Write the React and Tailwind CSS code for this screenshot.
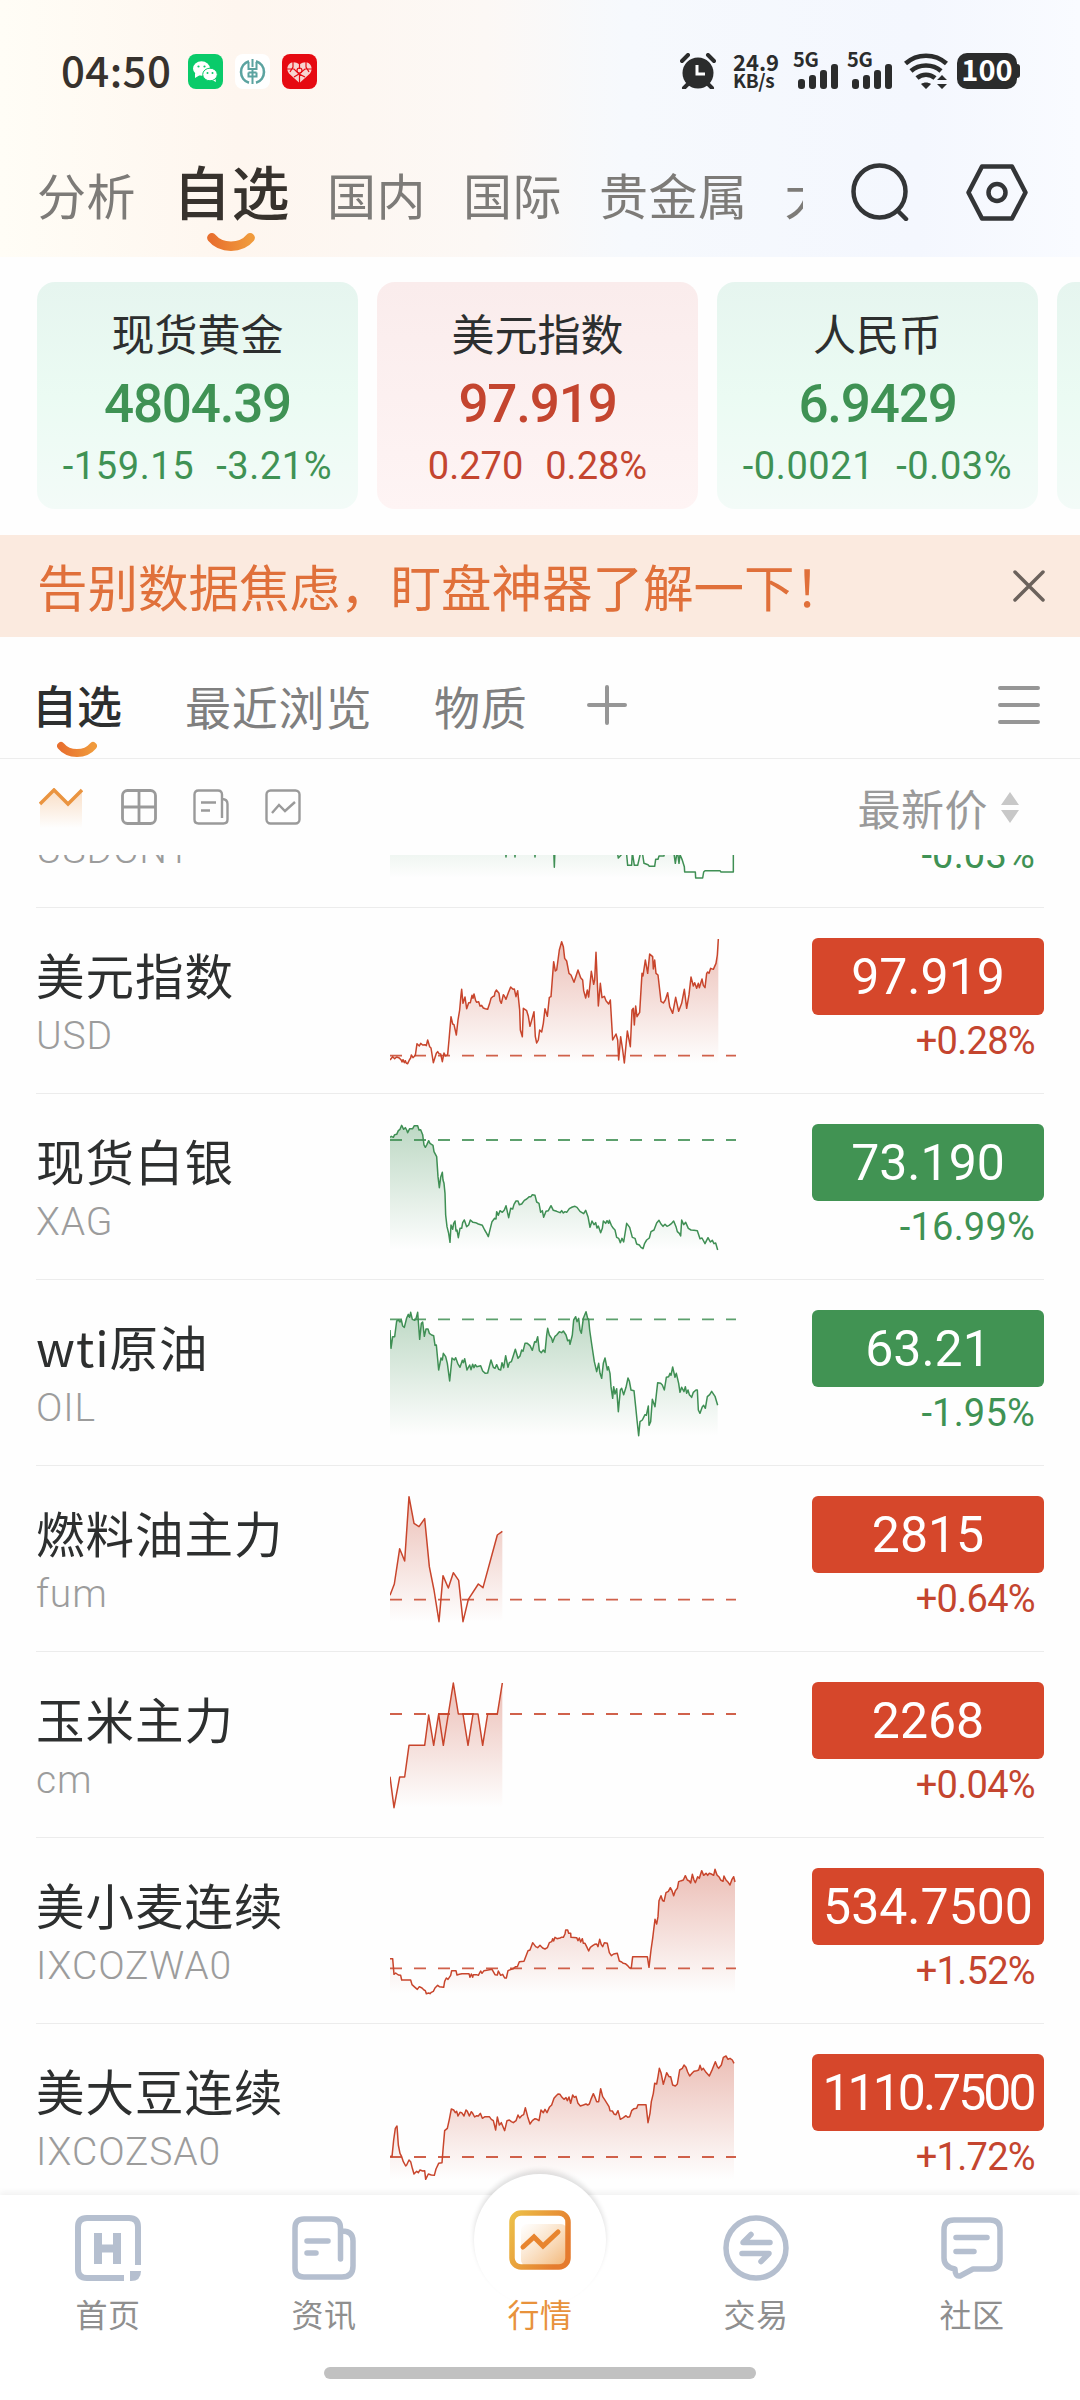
const GREEN = "#3f8f54";
const RED = "#c8452c";

const cards = [
  { name: "现货黄金", change: "-159.15", percent: "-3.21%", price: "4804.39", up: false },
  { name: "美元指数", change: "0.270", percent: "0.28%", price: "97.919", up: true },
  { name: "人民币", change: "-0.0021", percent: "-0.03%", price: "6.9429", up: false },
];

const rows = [
  {
    name: "人民币",
    code: "USDCNY",
    price: "6.9429",
    percent: "-0.03%",
    up: false,
    top: 0,
    base: 60,
    points:
      "60,180 200,150 300,300 400,380 406,380 408,405 410,380 433,380 435,405 437,380 493,380 495,405 497,380 551,380 553,436 555,380 740,380 745,408 754,398 756,380 770,398 773,430 785,430 787,390 793,430 803,430 811,395 818,398 822,424 834,428 838,433 854,433 857,412 864,412 867,402 882,402 884,380 910,380 916,424 922,385 927,424 930,398 936,412 943,434 944,450 976,450 977,468 998,468 1001,450 1005,446 1050,446 1053,450 1090,450 1090,380",
  },
  {
    name: "美元指数",
    code: "USD",
    price: "97.919",
    percent: "+0.28%",
    up: true,
    top: 24,
    base: 467,
    points:
      "60,480 68,470 74,476 80,471 88,474 94,481 96,486 99,479 103,488 106,482 109,490 113,491 118,480 122,474 124,465 129,473 136,466 141,431 148,438 152,430 158,435 165,434 169,437 173,420 179,440 183,444 190,488 199,460 203,455 207,461 212,462 217,485 222,459 227,468 233,464 237,420 243,350 248,372 252,374 259,405 264,360 269,330 273,285 275,268 279,310 285,291 290,326 296,308 301,308 306,286 309,295 312,282 317,302 320,307 326,305 330,318 335,316 340,324 346,326 353,328 359,310 363,295 368,290 373,288 375,277 379,270 387,280 390,302 394,310 400,284 403,288 408,298 415,278 422,261 429,268 433,267 438,290 443,272 449,330 451,390 457,410 460,325 470,332 475,349 480,379 492,335 496,410 500,429 505,420 509,390 515,396 520,370 525,326 532,349 538,292 543,290 551,185 556,213 560,210 568,150 575,125 580,140 584,175 590,183 597,220 603,225 612,247 624,210 632,233 638,240 641,272 647,294 652,270 656,291 664,214 671,253 674,240 678,157 685,318 691,250 696,293 703,289 708,302 716,312 721,300 728,420 738,402 743,420 746,480 752,410 758,450 763,489 772,393 781,440 786,330 790,325 793,375 797,318 801,350 809,337 816,220 819,228 826,180 833,220 839,162 848,170 850,207 854,180 858,220 864,225 873,304 880,309 886,300 893,278 899,320 908,340 917,292 926,334 935,310 943,268 950,325 957,284 963,231 970,258 974,248 980,265 985,250 988,263 996,237 1000,256 1005,263 1010,220 1013,216 1017,220 1022,205 1030,208 1038,190 1042,165 1045,117",
  },
  {
    name: "现货白银",
    code: "XAG",
    price: "73.190",
    percent: "-16.99%",
    up: false,
    top: 582,
    base: 720,
    points:
      "60,712 64,709 70,712 74,704 80,703 85,692 90,688 95,676 101,688 106,683 110,690 113,698 119,686 128,686 133,677 143,677 147,690 152,689 158,704 162,735 166,742 171,733 176,722 180,730 189,736 192,755 200,770 204,830 208,863 212,832 217,817 219,840 222,850 225,880 227,945 231,980 236,1000 240,1027 243,975 248,988 251,970 255,963 258,993 261,990 265,1013 270,985 275,985 278,968 283,960 290,980 296,975 301,960 309,967 317,968 325,972 337,976 344,990 350,1000 355,1010 361,985 366,965 374,955 378,957 380,935 385,946 390,932 397,937 403,930 408,917 416,953 422,925 428,927 432,913 438,903 444,903 448,914 455,912 463,901 470,897 478,890 483,890 487,884 495,886 500,906 507,910 512,937 517,932 521,952 528,934 535,932 543,917 550,931 560,934 570,938 575,932 580,939 585,935 590,937 598,926 607,921 615,919 621,922 630,934 641,941 647,931 654,950 660,982 666,963 672,974 677,968 681,984 685,978 692,998 697,985 700,963 707,970 711,962 716,970 718,961 724,976 730,985 735,990 740,1012 746,1015 751,1028 756,1015 761,1026 770,970 779,982 787,1012 795,1015 800,1032 808,1035 813,1042 819,1046 824,1030 830,1020 838,1014 843,995 852,990 860,969 867,961 873,972 879,979 885,973 891,979 897,976 905,970 911,963 918,980 922,995 928,1000 932,1008 935,960 941,974 947,967 955,985 963,990 972,991 982,992 990,1016 996,1014 1005,1031 1014,1013 1021,1026 1027,1021 1032,1031 1037,1029 1043,1050",
  },
  {
    name: "wti原油",
    code: "OIL",
    price: "63.21",
    percent: "-1.95%",
    up: false,
    top: 0,
    base: 118,
    points:
      "60,150 63,205 68,170 74,170 80,123 86,120 90,126 94,120 98,138 103,142 110,114 115,103 119,112 122,97 127,118 134,121 138,116 143,97 149,178 154,130 158,126 163,169 168,147 174,147 178,160 185,165 191,167 195,196 199,195 206,270 213,234 217,240 220,220 227,230 232,250 239,303 246,234 253,240 257,233 263,250 270,262 277,241 280,248 284,236 291,270 299,255 303,269 308,253 312,263 316,254 320,260 332,257 338,273 346,280 353,279 363,240 370,262 375,265 380,254 386,268 392,270 396,248 401,263 407,227 414,262 418,248 424,245 428,233 436,208 444,235 450,228 455,210 459,214 465,190 472,190 480,197 487,211 494,185 498,187 503,170 508,212 514,218 520,210 525,217 530,165 533,145 538,165 545,175 548,187 555,169 560,165 568,155 575,158 580,153 588,165 593,182 598,180 600,193 607,165 611,120 617,110 621,125 626,115 630,150 634,160 640,115 644,105 648,95 653,115 656,118 659,150 665,192 673,245 680,275 686,250 690,280 695,295 700,250 705,234 712,270 715,260 720,280 723,320 728,355 731,320 735,342 740,326 745,395 751,330 755,325 761,344 768,322 774,294 778,303 783,330 792,332 797,380 801,420 806,467 810,425 817,420 825,404 829,406 835,378 837,436 842,425 847,358 855,380 863,308 872,310 877,315 883,330 889,292 896,290 900,280 903,286 908,261 915,292 919,280 926,310 930,337 935,322 942,335 946,320 950,340 954,330 958,344 965,352 970,337 978,330 982,330 985,390 990,400 997,380 1001,376 1006,385 1012,350 1019,344 1025,334 1035,349 1043,376",
  },
  {
    name: "燃料油主力",
    code: "fum",
    price: "2815",
    percent: "+0.64%",
    up: true,
    top: 558,
    base: 959,
    points:
      "60,946 73,912 89,806 104,843 117,650 132,730 147,740 164,716 178,860 192,930 207,1025 219,887 235,924 250,878 266,901 279,1025 295,958 325,912 339,923 382,765 397,754",
  },
  {
    name: "玉米主力",
    code: "cm",
    price: "2268",
    percent: "+0.04%",
    up: true,
    top: -24,
    base: 162,
    points:
      "60,350 72,443 89,351 104,351 117,256 164,256 176,165 191,256 206,162 235,162 220,256 206,162 235,162 250,69 265,162 279,162 294,256 309,162 279,162 324,162 338,256 353,162 382,162 397,69",
  },
  {
    name: "美小麦连续",
    code: "IXCOZWA0",
    price: "534.7500",
    percent: "+1.52%",
    up: true,
    top: -36,
    base: 355,
    points:
      "60,326 68,326 72,373 77,369 85,375 92,376 95,390 122,390 126,404 135,412 142,418 148,410 156,414 162,420 166,422 169,431 176,429 180,431 184,427 190,424 195,414 203,406 208,410 221,412 224,394 229,384 234,388 242,376 245,362 258,362 261,375 268,373 276,371 297,371 300,382 304,372 308,382 310,374 320,374 325,376 332,363 336,370 342,362 366,358 375,374 382,375 385,363 392,376 398,373 404,384 409,384 414,362 424,358 430,356 437,350 442,350 448,335 462,334 468,318 474,302 480,300 488,278 497,290 503,293 510,286 518,294 525,297 532,293 538,278 545,275 548,266 551,273 555,262 561,266 570,264 574,262 580,262 585,252 587,240 593,240 596,250 602,250 603,262 620,263 624,272 628,264 632,276 637,266 640,280 645,280 650,290 656,303 661,292 668,287 674,283 680,282 684,290 689,268 694,284 698,290 703,278 712,280 718,308 724,317 731,312 742,310 748,333 755,336 760,340 766,341 772,346 779,354 784,353 788,320 832,320 837,352 843,300 848,265 851,240 855,208 860,222 864,200 867,152 873,137 878,152 882,154 888,128 895,124 901,113 906,122 911,137 916,122 922,115 926,95 934,92 940,90 946,77 952,90 958,93 962,99 967,73 972,90 976,98 983,80 988,85 995,62 1001,76 1008,70 1013,76 1018,70 1024,72 1031,76 1035,58 1041,75 1048,82 1052,90 1059,94 1062,78 1068,90 1073,95 1080,105 1086,88 1091,80 1095,96",
  },
  {
    name: "美大豆连续",
    code: "IXCOZSA0",
    price: "1110.7500",
    percent: "+1.72%",
    up: true,
    top: 522,
    base: 921,
    points:
      "60,919 66,920 71,870 76,835 81,828 85,885 90,910 95,920 100,935 107,948 110,945 117,930 122,935 127,955 132,972 140,964 145,968 150,960 158,963 164,962 167,988 175,972 184,975 193,976 198,957 206,940 216,938 219,900 224,842 232,835 238,808 244,777 251,780 256,788 260,784 264,798 270,787 275,788 282,798 288,780 292,784 298,798 304,785 308,790 314,801 320,797 325,798 331,790 337,805 345,800 358,800 364,808 370,812 377,840 382,801 388,825 394,818 404,842 411,812 418,810 424,815 430,818 438,812 444,795 449,804 455,797 461,794 466,773 473,800 480,822 487,812 495,806 501,808 507,812 513,780 520,788 525,778 531,788 538,772 545,765 552,745 558,738 564,732 570,733 576,742 582,748 588,743 592,752 597,741 602,760 608,735 613,742 618,739 624,760 631,768 640,765 648,762 653,765 658,762 664,745 670,731 675,742 680,755 686,755 692,716 698,740 704,749 711,760 717,770 720,782 727,783 733,793 738,794 744,782 751,808 760,803 768,797 773,802 779,800 785,782 792,776 800,775 804,764 828,764 834,818 840,790 844,755 850,730 854,700 860,702 864,680 868,655 873,668 880,703 890,668 897,680 902,680 908,705 916,708 922,702 929,660 937,655 942,645 948,652 953,666 959,678 966,670 972,664 980,662 986,660 990,646 995,660 1000,655 1008,667 1018,678 1027,658 1036,635 1042,650 1046,655 1054,645 1060,622 1068,618 1074,628 1080,625 1087,630 1092,640",
  },
];

function Smile({ className }) {
  return (
    <svg viewBox="0 0 48 18" className={className} fill="none">
      <defs>
        <linearGradient id="smile" x1="0" x2="1" y1="0" y2="0">
          <stop offset="0" stopColor="#e8702f" />
          <stop offset="1" stopColor="#f09a3c" />
        </linearGradient>
      </defs>
      <path
        d="M4.800 4.800C14 16 34 16 43.200 4.800"
        stroke="url(#smile)"
        strokeWidth="9.400"
        strokeLinecap="round"
      />
    </svg>
  );
}

function Signal() {
  return (
    <div className="-mt-px flex h-[37px] w-[44px] flex-col">
      <span className="-ml-[2px] h-[12px] text-[20px] leading-[14px] font-bold tracking-[-0.3px]">5G</span>
      <div className="ml-[3px] flex h-[25px] items-end gap-[4px]">
        <i className="h-[10px] w-[7px] rounded-[3px] bg-current" />
        <i className="h-[14px] w-[7px] rounded-[3px] bg-current" />
        <i className="h-[19px] w-[7px] rounded-[3px] bg-current" />
        <i className="h-[25px] w-[7px] rounded-[3px] bg-current" />
      </div>
    </div>
  );
}

function StatusBar() {
  return (
    <div className="flex h-[142px] items-start pt-[53px] pr-[60px] pl-[61px] text-[#2b2c2c]">
      <span className="-mt-[3px] w-[127px] text-[42px] leading-[37px] font-medium tracking-[0.4px] text-[#37322d]">
        04:50
      </span>
      <div className="flex gap-[12px] pt-px">
        <svg viewBox="0 0 35 35" className="size-[35px]">
          <rect width="35" height="35" rx="8" fill="#0acb6a" />
          <ellipse cx="13.500" cy="14.500" rx="8.500" ry="7.200" fill="#fff" />
          <path d="M7 19v5l5-3zM24 26l4 2-1-5z" fill="#fff" />
          <ellipse cx="22" cy="20.500" rx="7.300" ry="6.300" fill="#fff" stroke="#0acb6a" />
          <g fill="#0acb6a">
            <circle cx="10.500" cy="12.500" r="1.100" />
            <circle cx="16.500" cy="12.500" r="1.100" />
            <circle cx="19.500" cy="19" r="1" />
            <circle cx="24.500" cy="19" r="1" />
          </g>
        </svg>
        <svg viewBox="0 0 35 35" className="size-[35px]" fill="none" stroke="#5ba3a0">
          <rect width="35" height="35" rx="8" fill="#fff" stroke="none" />
          <path d="M14 7.200A11.300 11.300 0 0 0 14 28.800M21 7.200A11.300 11.300 0 0 1 21 28.800" strokeWidth="2.600" />
          <path d="M17.500 5v8M17.500 15v15M13.500 8v7h8v-7M13.500 18.500h8M13.500 18.500v4h8v-4" strokeWidth="2" />
        </svg>
        <svg viewBox="0 0 35 35" className="size-[35px]">
          <rect width="35" height="35" rx="8" fill="#e60a12" />
          <path
            d="M17.500 29 7 19.500C2 13 9 4 17.500 10.500 26 4 33 13 28 19.500z"
            fill="#f7d4d0"
          />
          <g stroke="#e60a12" strokeWidth="1.200" fill="none">
            <path d="M5 15h7l5 5 6-5h7M11 7v6l-3 5M24 7v6l3 5M17.500 10v5M12 23l5-3 6 3M17.500 20v9" />
            <circle cx="17.500" cy="16.500" r="2.500" />
          </g>
        </svg>
      </div>
      <div className="ml-auto flex h-9 items-start">
        <svg viewBox="0 0 36 36" className="size-9" fill="none" stroke="currentColor" strokeWidth="4">
          <circle cx="18" cy="20" r="15.500" fill="currentColor" stroke="none" />
          <path d="m2 8 6-6M34 8l-6-6M4 35l5-5M32 35l-5-5" strokeLinecap="round" />
          <path d="M17 12v9h8" stroke="#fff" strokeWidth="3" />
        </svg>
        <div className="-mt-px ml-[17px] flex w-[62px] flex-col font-bold">
          <span className="text-[22px] leading-[18px]">24.9</span>
          <span className="text-[19px] leading-[20px] tracking-[-0.4px]">KB/s</span>
        </div>
        <Signal />
        <div className="w-[10px]" />
        <Signal />
        <svg viewBox="0 0 44 36" className="ml-[11px] h-9 w-[44px]" fill="none" stroke="currentColor" strokeWidth="4.500">
          <path d="M1.500 10.500C13 0 31 0 42.500 10.500M7 18c8-7.500 22-7.500 30 0M13 25c5-4.500 13-4.500 18 0" />
          <path d="m17 31 5 5 5-5c-3-2-7-2-10 0zM33 27l5-5 5 5zM33 31l5 5 5-5z" fill="currentColor" stroke="none" />
        </svg>
        <div className="ml-[9px] flex h-9 w-[60px] items-center justify-center rounded-[10px] bg-[#2b2c2c] text-white">
          <span className="-mt-[5px] text-[29px] leading-none font-bold">100</span>
        </div>
        <div className="mt-[11px] h-[14px] w-[3px] rounded-r bg-[#2b2c2c]" />
      </div>
    </div>
  );
}

function TopTabs() {
  return (
    <div className="flex h-[115px] items-start">
      <div className="flex h-[115px] w-[803px] gap-[37px] overflow-hidden pt-[15px] pl-[37px] text-[49px] leading-[74px] tracking-[0.5px] whitespace-nowrap text-[#7d7b78]">
        <span>分析</span>
        <span className="relative -mt-[4px] h-[96px] w-[119px] text-[58px] font-medium text-[#37322d]">
          自选
          <Smile className="absolute top-[80px] left-[34px] h-[18px] w-[48px]" />
        </span>
        <span>国内</span>
        <span>国际</span>
        <span>贵金属</span>
        <span>大宗</span>
      </div>
      <svg viewBox="0 0 58 58" className="mt-[21px] ml-[48px] size-[58px]" fill="none" stroke="#333537" strokeWidth="4.500" strokeLinecap="round">
        <circle cx="28.500" cy="28.500" r="26" />
        <path d="m46.500 47.500 8.500 8.500" />
      </svg>
      <svg viewBox="0 0 62 58" className="mt-[22px] ml-[57px] h-[58px] w-[62px]" fill="none" stroke="#333537" strokeWidth="4.500" strokeLinejoin="round">
        <path d="M16 2.500h30L59.500 28.500 46 54.500H16L2.500 28.500z" />
        <circle cx="31" cy="28.500" r="8.500" />
      </svg>
    </div>
  );
}

function Card({ item }) {
  return (
    <div
      className={`flex h-[227px] w-[321px] shrink-0 flex-col items-center rounded-[18px] bg-gradient-to-b ${
        item.up
          ? "from-[#faecec] to-[#fef4f4] text-[#c4452f]"
          : "from-[#e6f5ef] via-[#ebfbf3] to-[#f3fbf8] text-[#3f9254]"
      }`}
    >
      <span className="mt-[19px] text-[43px] leading-[62px] text-[#2d2f2f]">{item.name}</span>
      <span className="mt-[9px] font-[Roboto] text-[53px] leading-[64px] font-medium tracking-[-1.2px]">
        {item.price}
      </span>
      <div className="mt-[5px] flex gap-[22px] font-[Roboto] text-[38px] leading-[50px] whitespace-nowrap">
        <span className={item.up ? "" : "tracking-[0.6px]"}>{item.change}</span>
        <span className={item.up ? "" : "tracking-[0.6px]"}>{item.percent}</span>
      </div>
    </div>
  );
}

function ListTabs() {
  return (
    <div className="flex h-[122px] items-start border-b border-[#ededed] pt-[33px] pr-[40px] pl-[32px] text-[46px] leading-[70px] tracking-[0.8px] text-[#7f7f7f]">
      <span className="relative w-[153px] text-[45px] font-medium tracking-normal text-[#2d2f2f]">
        自选
        <Smile className="absolute top-[71px] left-[25px] h-[17px] w-[40px]" />
      </span>
      <span className="w-[249px]">最近浏览</span>
      <span className="w-[153px]">物质</span>
      <svg viewBox="0 0 40 40" className="mt-[15px] size-[40px]" stroke="#969696" strokeWidth="4" strokeLinecap="round">
        <path d="M20 2v36M2 20h36" />
      </svg>
      <svg viewBox="0 0 42 40" className="mt-[15px] ml-auto h-[40px] w-[42px]" stroke="#969696" strokeWidth="4" strokeLinecap="round">
        <path d="M2 3h38M2 20h38M2 37h38" />
      </svg>
    </div>
  );
}

function Toolbar() {
  return (
    <div className="flex h-[96px] items-start pt-[29px] pr-[60px] pl-[39px] text-[#9a9a9a]">
      <svg viewBox="0 0 44 40" className="h-[40px] w-[44px]" fill="none">
        <defs>
          <linearGradient id="trend" x1="0" x2="0" y1="0" y2="1">
            <stop offset="0" stopColor="#f6c9a0" stopOpacity=".6" />
            <stop offset="1" stopColor="#f6c9a0" stopOpacity="0" />
          </linearGradient>
        </defs>
        <path d="M1 15 15 2l14 14L43 3v37H1z" fill="url(#trend)" />
        <path d="M1 16 15 2l14 14L43 2" stroke="#ea9440" strokeWidth="3.500" />
      </svg>
      <svg viewBox="0 0 36 36" className="mt-px ml-[38px] size-9" fill="none" stroke="currentColor" strokeWidth="2.800">
        <rect x="1.500" y="1.500" width="33" height="33" rx="5" />
        <path d="M18 1.500v33M1.500 18h33" />
      </svg>
      <svg viewBox="0 0 36 36" className="mt-px ml-[36px] size-9" fill="none" stroke="currentColor" strokeWidth="2.400">
        <path d="M29 29V5.500q0-4-4-4H5.500q-4 0-4 4v25q0 4 4 4H30.500q4 0 4-4V15q0-5-5.500-5M8 13.500h15M8 21.500h9" />
      </svg>
      <svg viewBox="0 0 36 36" className="mt-px ml-[36px] size-9" fill="none" stroke="currentColor" strokeWidth="2.400">
        <rect x="1.500" y="1.500" width="33" height="33" rx="4" />
        <path d="m7 24 7-8 6 6 10-9" />
      </svg>
      <span className="-mt-[12px] ml-auto text-[43px] leading-[62px] tracking-[0.5px]">最新价</span>
      <svg viewBox="0 0 20 32" className="mt-[4px] ml-[12px] h-[32px] w-[20px]" fill="#c8c8c8">
        <path d="m10 0 9 13H1zM10 31l9-13H1z" />
      </svg>
    </div>
  );
}

function Chart({ row }) {
  const color = row.up ? RED : GREEN;
  const pairs = row.points.split(" ");
  const ys = pairs.map((p) => Number(p.split(",")[1]));
  const bottom = Math.max(...ys);
  const lastX = pairs[pairs.length - 1].split(",")[0];
  const id = `fill-${row.code}`;
  return (
    <svg viewBox={`60 ${row.top} 1041 558`} className="h-[186px] w-[347px] shrink-0" fill="none">
      <defs>
        <linearGradient id={id} gradientUnits="userSpaceOnUse" x1="0" x2="0" y1={Math.min(...ys)} y2={bottom}>
          <stop offset="0" stopColor={color} stopOpacity=".34" />
          <stop offset="1" stopColor={color} stopOpacity="0" />
        </linearGradient>
      </defs>
      <polygon points={`60,${bottom} ${row.points} ${lastX},${bottom}`} fill={`url(#${id})`} />
      <path d={`M60 ${row.base}H1098`} stroke={color} strokeWidth="5.500" strokeDasharray="36 36" opacity=".85" />
      <polyline points={row.points} stroke={color} strokeWidth="4.500" strokeLinejoin="round" />
    </svg>
  );
}

function Row({ row }) {
  return (
    <div className="mx-[36px] flex h-[186px] shrink-0 border-b border-[#ececec]">
      <div className="flex w-[354px] shrink-0 flex-col">
        <span className="mt-[31px] text-[48.500px] leading-[70px] tracking-[1px] text-[#2d2f2f]">{row.name}</span>
        <span className="mt-[4px] font-[Roboto] text-[39px] leading-[46px] font-light tracking-[0.9px] text-[#9c9c9c]">
          {row.code}
        </span>
      </div>
      <Chart row={row} />
      <div className="ml-auto flex w-[233px] flex-col items-end font-[Roboto]">
        <div
          className={`mt-[30px] flex h-[77px] w-[232px] items-center justify-center rounded-[6px] pt-px text-[50px] leading-none text-white ${
            row.up ? "bg-[#d6472b]" : "bg-[#419353]"
          } ${row.price.length > 8 ? "tracking-[-3px]" : ""}`}
        >
          {row.price}
        </div>
        <span
          className={`mt-[5px] mr-[9px] text-[38px] leading-[42px] ${
            row.up ? "tracking-[-0.7px] text-[#c4452f]" : "tracking-[0.2px] text-[#3f9254]"
          }`}
        >
          {row.percent}
        </span>
      </div>
    </div>
  );
}

function NavItem({ label, active, children }) {
  return (
    <div className={`relative flex w-[216px] flex-col items-center ${active ? "text-[#e8923c]" : "text-[#8f8f8f]"}`}>
      <div className="flex h-[95px] items-start">{children}</div>
      <span className="text-[32px] leading-[46px] tracking-[0.5px]">{label}</span>
    </div>
  );
}

function BottomNav() {
  return (
    <div className="relative h-[205px] bg-white shadow-[0_-3px_6px_rgba(0,0,0,0.05)]">
      <div className="absolute -top-[21px] left-[474px] size-[132px] rounded-full bg-white shadow-[0_-4px_5px_rgba(0,0,0,0.12)]" />
      <div className="relative flex h-[172px]">
        <NavItem label="首页">
          <svg viewBox="0 0 66 66" className="mt-[20px] size-[66px]" fill="none" stroke="#b5bfcf" strokeWidth="6">
            <path d="M63 50V12q0-9-9-9H12q-9 0-9 9v42q0 9 9 9h37" />
            <path d="M23 18v31M42 18v31M23 33.500h19" strokeWidth="8" />
            <path d="M55 56h11q0 10-10 10h-1z" fill="#b5bfcf" stroke="none" />
          </svg>
        </NavItem>
        <NavItem label="资讯">
          <svg viewBox="0 0 64 64" className="mt-[21px] size-[64px]" fill="none" stroke="#b5bfcf" strokeWidth="5.500" strokeLinecap="round">
            <path d="M48.500 43V12q0-9-9-9H12q-9 0-9 9v40q0 9 9 9h38q11 0 11-11V25q0-10-11-10M15 25h21M15 37h9" />
          </svg>
        </NavItem>
        <NavItem label="行情" active>
          <svg viewBox="0 0 62 60" className="mt-[15px] h-[60px] w-[62px]" fill="none">
            <defs>
              <linearGradient id="market" x1="0" x2="1" y1="0" y2=".5">
                <stop offset="0" stopColor="#ecc048" />
                <stop offset="1" stopColor="#e57b2e" />
              </linearGradient>
              <linearGradient id="glow" x1="0" x2="1" y1="0" y2="1">
                <stop offset="0" stopColor="#f7cfa0" stopOpacity="0" />
                <stop offset="1" stopColor="#f2b473" />
              </linearGradient>
            </defs>
            <rect x="12" y="14" width="46" height="42" rx="6" fill="url(#glow)" />
            <rect x="3" y="3" width="56" height="54" rx="9" stroke="url(#market)" strokeWidth="5.500" />
            <path d="m14 37 11-10 9 9 15-14" stroke="#e8852f" strokeWidth="5" strokeLinecap="round" />
          </svg>
        </NavItem>
        <NavItem label="交易">
          <svg viewBox="0 0 66 66" className="mt-[20px] size-[66px]" fill="none" stroke="#b5bfcf" strokeWidth="5.500" strokeLinecap="round" strokeLinejoin="round">
            <circle cx="33" cy="33" r="30" />
            <path d="M47 27.500H20l8-8M19 38.500h27l-8 8" />
          </svg>
        </NavItem>
        <NavItem label="社区">
          <svg viewBox="0 0 62 62" className="mt-[22px] size-[62px]" fill="none" stroke="#b5bfcf" strokeWidth="5.500" strokeLinecap="round" strokeLinejoin="round">
            <path d="M13 3h36q10 0 10 10v29q0 10-10 10H32l-13 7q-5 1-5-7Q3 50 3 41V13Q3 3 13 3zM15 20.500h31M15 34.500h18" />
          </svg>
        </NavItem>
      </div>
      <div className="relative mx-auto h-[12px] w-[432px] rounded-full bg-[#c1c1c1]" />
    </div>
  );
}

function App() {
  return (
    <div className="flex h-[2400px] w-[1080px] flex-col overflow-hidden bg-[#fefefe] font-['Noto_Sans_CJK_SC',sans-serif]">
      <header className="h-[257px] bg-[linear-gradient(90deg,#fffdf6,#fef6ef_22%,#fcf8f5_45%,#f6f9fd_58%,#f4f7fe_85%,#f9fbff)]">
        <StatusBar />
        <TopTabs />
      </header>
      <section className="flex h-[278px] gap-[19px] overflow-hidden pt-[25px] pl-[37px]">
        {cards.map((item) => (
          <Card key={item.name} item={item} />
        ))}
        <div className="h-[227px] w-[321px] shrink-0 rounded-[18px] bg-gradient-to-b from-[#e6f5ef] via-[#ebfbf3] to-[#f3fbf8]" />
      </section>
      <div className="flex h-[102px] items-center justify-between bg-[#fbeadf] pr-[34px] pl-[37px] text-[50.500px] text-[#e0703a]">
        <span>告别数据焦虑，盯盘神器了解一下！</span>
        <svg viewBox="0 0 34 34" className="size-[34px]" stroke="#6b625c" strokeWidth="3.500" strokeLinecap="round">
          <path d="m3 3 28 28M31 3 3 31" />
        </svg>
      </div>
      <ListTabs />
      <Toolbar />
      <main className="min-h-0 flex-1 overflow-hidden">
        <div className="-mt-[133px] flex flex-col">
          {rows.map((row) => (
            <Row key={row.code} row={row} />
          ))}
        </div>
      </main>
      <BottomNav />
    </div>
  );
}

export default App;
